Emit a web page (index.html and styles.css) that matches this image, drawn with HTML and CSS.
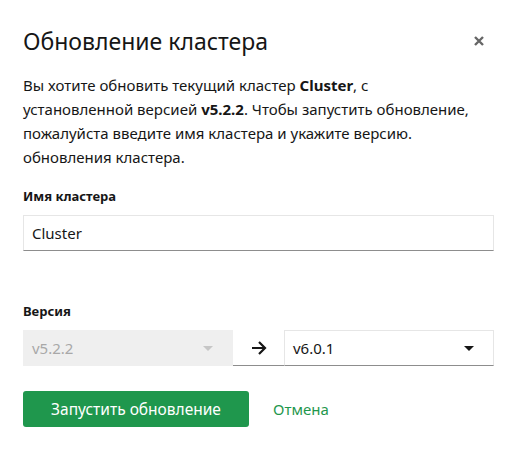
FILE: index.html
```html
<!DOCTYPE html>
<html lang="ru">
  <head>
    <meta charset="UTF-8" />
    <title>Обновление кластера</title>
    <link rel="stylesheet" href="styles.css">
  </head>
  <body>
    <div class="modal">
      <div class="modal-header">
        <h2>Обновление кластера</h2>
        <button type="button" class="close" aria-label="Закрыть">
          <svg width="12" height="12" viewBox="0 0 12 12">
            <path d="M2 2 L10 10 M10 2 L2 10" stroke="#666" stroke-width="2.4" />
          </svg>
        </button>
      </div>
      <p class="intro">
        Вы хотите обновить текущий кластер <b>Cluster</b>, с<br />
        установленной версией <b>v5.2.2</b>. Чтобы запустить обновление,<br />
        пожалуйста введите имя кластера и укажите версию.<br />
        обновления кластера.
      </p>
      <label class="field">
        <span class="field-label">Имя кластера</span>
        <input type="text" class="text-input" value="Cluster" />
      </label>
      <div class="field version">
        <span class="field-label">Версия</span>
        <div class="version-row">
          <div class="select disabled">
            v5.2.2
            <span class="caret"></span>
          </div>
          <div class="arrow">
            <svg width="16" height="14" viewBox="0 0 16 14">
              <path d="M1 7 H14 M8 1 L14 7 L8 13" fill="none" stroke="#161616" stroke-width="2.2" />
            </svg>
          </div>
          <div class="select">
            v6.0.1
            <span class="caret"></span>
          </div>
        </div>
      </div>
      <div class="actions">
        <button type="button" class="primary">Запустить обновление</button>
        <a href="#" class="cancel">Отмена</a>
      </div>
    </div>
  </body>
</html>
```

FILE: styles.css
```css
body {
  margin: 0;
  background: #fff;
  font-family: "Noto Sans", sans-serif;
  color: #161616;
}

.modal {
  width: 471px;
  padding: 20px 23px 0;
}

.modal-header {
  display: flex;
  justify-content: space-between;
  align-items: center;
}

.modal-header h2 {
  margin: 0;
  font-size: 23px;
  font-weight: 400;
  line-height: 42px;
}

.close {
  border: 0;
  background: none;
  padding: 0;
  margin-right: 9px;
  cursor: pointer;
  display: flex;
}

.intro {
  margin: 11px 0 0;
  font-size: 15px;
  line-height: 24px;
}

.field {
  display: flex;
  flex-direction: column;
}

.field-label {
  font-size: 13px;
  font-weight: 700;
  line-height: 18px;
  margin: 18px 0 10px;
}

.text-input {
  height: 36px;
  box-sizing: border-box;
  border: 1px solid #e6e6e6;
  border-bottom-color: #8d8d8d;
  padding: 0 8px;
  font: inherit;
  font-size: 15px;
  color: #161616;
  outline: none;
}

.version .field-label {
  margin-top: 51px;
}

.version-row {
  display: flex;
  height: 36px;
}

.select {
  flex: 1;
  display: flex;
  align-items: center;
  justify-content: space-between;
  padding: 0 19px 0 8px;
  font-size: 15px;
  border: 1px solid #e6e6e6;
  border-bottom-color: #8d8d8d;
}

.select.disabled {
  flex: 0 0 210px;
  box-sizing: border-box;
  background: #efefef;
  color: #a8a8a8;
  border-color: #efefef;
}

.caret {
  width: 0;
  height: 0;
  border-left: 5px solid transparent;
  border-right: 5px solid transparent;
  border-top: 5px solid #161616;
}

.disabled .caret {
  border-top-color: #c6c6c6;
}

.arrow {
  width: 51px;
  display: flex;
  align-items: center;
  justify-content: center;
  border-bottom: 1px solid #8d8d8d;
}

.actions {
  display: flex;
  align-items: center;
  gap: 24px;
  margin-top: 25px;
}

.primary {
  width: 226px;
  height: 36px;
  border: 0;
  border-radius: 3px;
  background: #1f974d;
  color: #fff;
  font: inherit;
  font-size: 15.5px;
  cursor: pointer;
}

.cancel {
  color: #1f974d;
  text-decoration: none;
  font-size: 15px;
}
```
